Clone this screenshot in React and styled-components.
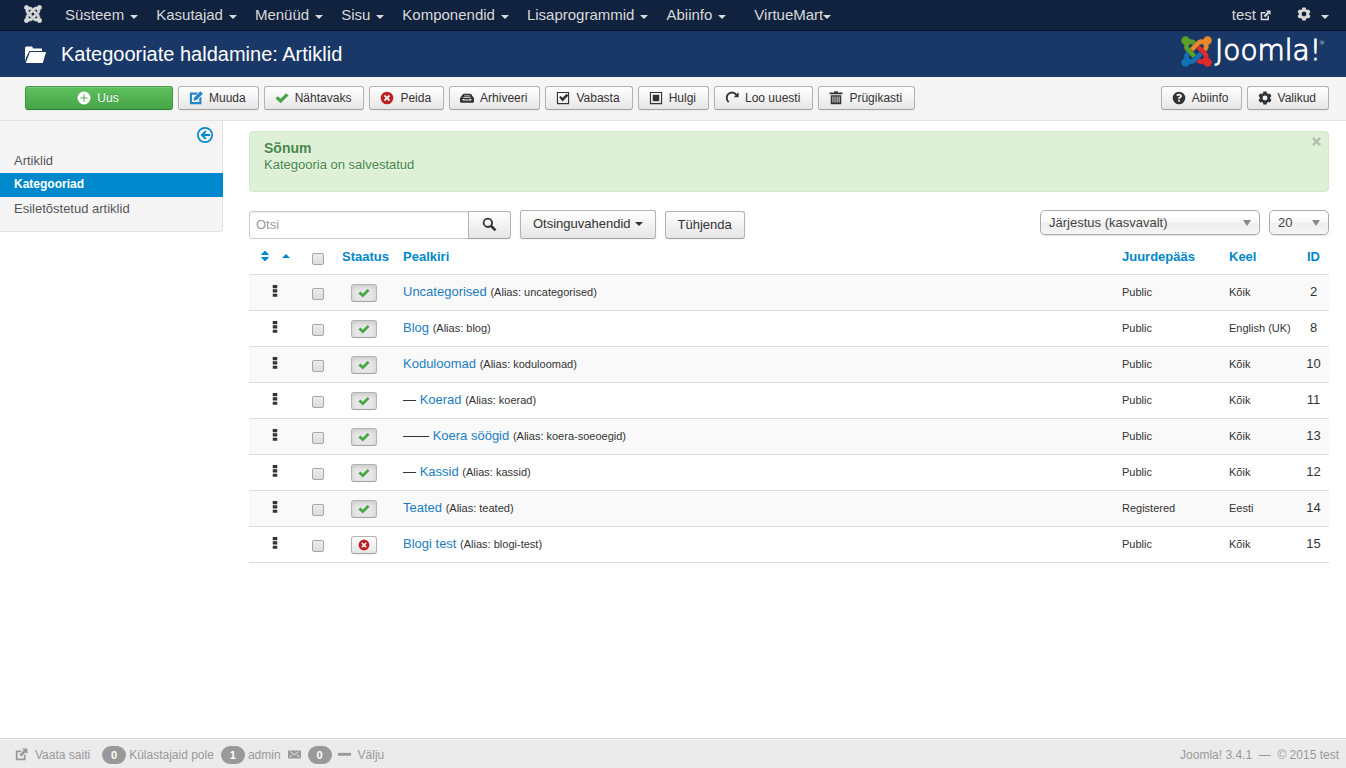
import React from "react";
import styled, { createGlobalStyle, css } from "styled-components";

const GlobalStyle = createGlobalStyle`
  * {
    box-sizing: border-box;
  }
  body {
    margin: 0;
    background: #fff;
    color: #333;
    font-family: "Liberation Sans", Arial, Helvetica, sans-serif;
    font-size: 13px;
    line-height: 18px;
  }
  button, input, select {
    font-family: inherit;
    margin: 0;
  }
  a {
    text-decoration: none;
  }
`;

/* ---------- icons ---------- */

const Svg = styled.svg`
  display: block;
  flex: none;
  fill: currentColor;
`;

const paths = {
  plus: (
    <path
      fillRule="evenodd"
      d="M8 .6a7.400 7.400 0 1 0 0 14.800A7.400 7.400 0 0 0 8 .6zm-.6 3.200h1.200v3.600h3.600v1.200H8.600v3.600H7.400V8.600H3.800V7.400h3.600z"
    />
  ),
  edit: (
    <>
      <path d="M1 1.600h9.500L8 4.200H3.400v8.400h8.400V8.600l2.400-2.400V15H1z" />
      <path d="M13 .4 15.800 3.200 9 10l-4 1.200L6.200 7.200z" />
    </>
  ),
  check: <path d="M.6 8.600 3.200 6l3.200 2.900 6.400-6.400L15.400 5l-9 9z" />,
  cancel: (
    <path
      fillRule="evenodd"
      d="M8 .8a7.200 7.200 0 1 0 0 14.400A7.200 7.200 0 0 0 8 .8zM5.900 4.400 8 6.500l2.100-2.100 1.500 1.500L9.500 8l2.100 2.100-1.500 1.500L8 9.500l-2.100 2.100-1.500-1.500L6.500 8 4.400 5.900z"
    />
  ),
  archive: (
    <path
      fillRule="evenodd"
      d="M4.600 3h6.800l1.400.8L16 8.400v4.200l-1 .9H1l-1-.9V8.400l3.200-4.600zM4.800 5v.9h6.400V5zM3.700 7v.9h8.600V7zM2.500 9l1 1.800h9l1-1.800h-2l-.8.800H5.300L4.500 9z"
    />
  ),
  checkbox: (
    <>
      <path fillRule="evenodd" d="M1 1h14v14H1zm1.300 1.300v11.400h11.400V2.300z" />
      <path d="M3.600 7.200 5.400 5.600l2.100 2.200L12.200 3l2 2-6.700 7z" />
    </>
  ),
  partial: (
    <>
      <path fillRule="evenodd" d="M1 1h14v14H1zm1.300 1.300v11.400h11.400V2.300z" />
      <path d="M4.300 4.300h7.400v7.400H4.300z" />
    </>
  ),
  redo: (
    <path d="M10 7h5.600V1.400l-2 2A7 7 0 0 0 1 8c0 2.200 1 4.200 2.600 5.500l1.200-1.600A4.900 4.900 0 0 1 3.100 8a4.900 4.900 0 0 1 8.900-2.900z" />
  ),
  trash: (
    <path
      fillRule="evenodd"
      d="M6 .4h4v1.200h5.400v2.200H.6V1.600H6zM2 4.800h12V15H2zm2 1.400v7h1v-7zm2.400 0v7h1v-7zm2.400 0v7h1v-7zm2.300 0v7h1v-7z"
    />
  ),
  question: (
    <path
      fillRule="evenodd"
      d="M8 .8a7.200 7.200 0 1 0 0 14.400A7.200 7.200 0 0 0 8 .8zM4.900 4.800C5.500 3.700 6.600 3.100 8 3.100c2 0 3.300 1.100 3.300 2.700 0 1.100-.6 1.800-1.500 2.300-.7.400-.8.600-.8 1.200H7.100c0-1.500.4-2 1.400-2.600.6-.3.800-.5.800-.9 0-.5-.5-.8-1.200-.8-.8 0-1.200.3-1.600.9zM7.100 10.400H9v1.900H7.100z"
    />
  ),
  cog: (
    <path
      fillRule="evenodd"
      d="M6.200.6h3.600l.5 1.900 1.400.8 1.900-.5 1.800 3L14 7.200v1.600l1.400 1.400-1.800 3-1.900-.5-1.400.8-.5 1.900H6.200l-.5-1.900-1.400-.8-1.900.5-1.800-3L2 8.800V7.200L.6 5.800l1.800-3 1.900.5 1.400-.8zM8 5.200a2.800 2.800 0 1 0 0 5.600 2.800 2.800 0 0 0 0-5.600z"
    />
  ),
  search: (
    <path
      fillRule="evenodd"
      d="M6.200.8a5.400 5.400 0 1 0 2.900 10L13.400 15.200 15.400 13.200 11 8.800A5.400 5.400 0 0 0 6.200.8zm0 1.900a3.500 3.500 0 1 1 0 7 3.500 3.500 0 0 1 0-7z"
    />
  ),
  external: (
    <>
      <path d="M1 3h7.500L6.800 5.200H3.200v7.600h7.600V9.500l2.200-2V15H1z" />
      <path d="M8.600.6h6.800v6.800l-2.200-2.200-5.400 5.400-2.400-2.400 5.400-5.400z" />
    </>
  ),
  back: (
    <>
      <path
        fillRule="evenodd"
        d="M8 0a8 8 0 1 0 0 16A8 8 0 0 0 8 0zm0 1.700a6.300 6.300 0 1 1 0 12.600A6.300 6.300 0 0 1 8 1.700z"
      />
      <path d="M8.200 3.400 9.600 4.800 7.400 7h5.600v2H7.400l2.200 2.200-1.400 1.400L3.600 8z" />
    </>
  ),
  sort: <path d="M8 1.600l4.800 5.200H3.200zM3.200 9h9.600L8 14.200z" />,
  dots: <path d="M5 0h6v4.200H5zM5 5.800h6V10H5zM5 11.600h6v4.200H5z" />,
  mail: (
    <path
      fillRule="evenodd"
      d="M0 3h16v10H0zm2.300 1.500L8 9l5.700-4.500-.6-.5L8 7.700 2.900 4zM2 11.600l3.600-3-.6-.5-3.600 3zm12 0 .6-.5-3.600-3-.6.500z"
    />
  ),
  minus: <path d="M0 6h16v3.500H0z" />,
  close: <path d="M1.500 4 4 1.500l4 4 4-4L14.500 4l-4 4 4 4-2.500 2.500-4-4-4 4L1.500 12l4-4z" />,
};

const Icon = ({ name, size = 14, color }) => (
  <Svg width={size} height={size} viewBox="0 0 16 16" color={color} aria-hidden="true">
    {paths[name]}
  </Svg>
);

const FolderIcon = () => (
  <Svg width="21" height="17" viewBox="0 0 21 17" aria-hidden="true">
    <path d="M0 16V1.500L1 .5h6l1.300 2H17V5H4.500L1 11.500z" />
    <path d="M.8 17 5 6h16l-3.200 11z" />
  </Svg>
);

// four arms: top left, top right, bottom right, bottom left
const arms = [
  "M.6 92.1C.6 58.8 27.4 32 60.4 32c30 0 54.500 21.900 59.200 50.200 32.600-7.600 67.100.6 96.500 30l-44.300 44.300c-20.500-20.500-42.600-16.300-55.400-3.500-14.300 14.300-14.300 37.900 0 52.200l99.500 99.500-44 44.300c-87.700-87.200-49.700-49.700-99.800-99.700-26.800-26.500-35-64.800-24.800-98.900C20.400 144.600.6 120.700.6 92.100z",
  "M130.100 208.500l44.300 44.300c10-10 89.700-89.700 99.700-99.800 14.300-14.300 37.600-14.300 51.900 0 12.800 12.800 17 35-3.500 55.400l44 44.300c31.200-31.200 38.500-67.600 28.900-101.200 29.200-4.100 51.900-29.200 51.900-59.500 0-33.200-26.800-60.100-59.800-60.100-30.300 0-55.400 22.500-59.500 51.600-33.800-9.900-71.700-1.500-98.300 25.100-18.300 19.100-71.100 71.500-99.600 99.900z",
  "M396.400 360.700c8.200-32.700-.9-68.500-26.300-93.900-11.800-12.200 5 4.700-99.500-99.700l-44.300 44.300 99.700 99.700c14.300 14.300 14.300 37.600 0 51.900-12.800 12.800-35 17-55.400-3.500l-44 44.300c27.600 30.200 68 38.800 102.700 28 5.500 27.400 29.700 48.100 58.900 48.100 33 0 59.800-26.800 59.800-60.100 0-30.200-22.500-55-51.600-59.100z",
  "M312.100 307.600l-44-44.300c-87 86.400-50.400 50.400-99.700 99.800-14.300 14.300-37.600 14.300-51.900 0-13.100-13.400-16.900-35.300 3.200-55.400l-44-44.300c-30.200 30.200-38 65.200-29.500 98.300-26.700 6-46.200 29.900-46.200 58.200C0 453.200 26.800 480 59.800 480c28.600 0 52.500-19.800 58.600-46.700 32.700 8.200 68.500-.6 94.200-26 32.100-32 12.200-12.400 99.500-99.700z",
];

const JoomlaMark = ({ size, colors, stroke = 0 }) => (
  <Svg width={size} height={size} viewBox="-6 26 460 460" aria-hidden="true">
    {arms.map((d, i) => {
      const color = colors ? colors[i] : "currentColor";
      return <path key={i} d={d} fill={color} stroke={color} strokeWidth={stroke} />;
    })}
  </Svg>
);

const Caret = styled.span`
  flex: none;
  border: 4px solid transparent;
  border-top-color: currentColor;
  border-bottom: 0;
`;

/* ---------- top navigation ---------- */

const NavBar = styled.nav`
  display: flex;
  align-items: center;
  height: 31px;
  padding: 0 17px 0 24px;
  background: #10223e;
  border-bottom: 1px solid #0b1629;
  color: #d9d9d9;
`;

const Brand = styled.a`
  display: flex;
  margin-right: 14px;
  padding-bottom: 2px;
  color: inherit;
`;

const NavLink = styled.a`
  display: flex;
  align-items: center;
  gap: ${(p) => p.$gap || "6px"};
  padding: 0 9px;
  margin-left: ${(p) => (p.$apart ? "10px" : "0")};
  color: inherit;
  font-size: 15px;
  white-space: nowrap;

  ${Caret} {
    margin-top: 3px;
  }
`;

const NavRight = styled.div`
  display: flex;
  align-items: center;
  margin-left: auto;
  gap: 8px;
`;

const SettingsLink = styled(NavLink)`
  gap: 10px;
  padding-right: 0;

  svg {
    margin-bottom: 3px;
  }
`;

/* ---------- header ---------- */

const Header = styled.header`
  display: flex;
  align-items: center;
  justify-content: space-between;
  height: 46px;
  padding: 0 21px 0 25px;
  background: #1a3867;
  color: #fff;
`;

const PageTitle = styled.h1`
  display: flex;
  align-items: center;
  gap: 15px;
  margin: 0;
  font-size: 20px;
  font-weight: normal;
  line-height: 30px;
`;

const Logo = styled.a`
  display: flex;
  align-items: center;
  gap: 3px;
  padding-bottom: 6px;
  color: #fff;
  font-family: "DejaVu Sans", sans-serif;
  font-size: 28px;
  font-weight: 200;
  line-height: 30px;
  -webkit-text-stroke: 1px #fff;

  sup {
    align-self: flex-start;
    margin-left: -5px;
    font-size: 6px;
    line-height: 14px;
    -webkit-text-stroke: 0;
  }
`;

/* ---------- buttons ---------- */

const buttonLook = css`
  display: inline-flex;
  align-items: center;
  justify-content: center;
  border: 1px solid #b3b3b3;
  border-bottom-color: #a2a2a2;
  border-radius: 3px;
  background: linear-gradient(to bottom, #fff, #e6e6e6);
  box-shadow: inset 0 1px 0 rgba(255, 255, 255, 0.2), 0 1px 2px rgba(0, 0, 0, 0.05);
  color: #333;
  white-space: nowrap;
  cursor: pointer;
`;

const Toolbar = styled.div`
  display: flex;
  gap: 5px;
  padding: 9px 17px 10px 25px;
  background: #f5f5f5;
  border-bottom: 1px solid #e3e3e3;
`;

const ToolButton = styled.button`
  ${buttonLook}
  gap: 6px;
  height: 24px;
  padding: 0 12px 0 10px;
  font-size: 12px;
`;

const NewButton = styled(ToolButton)`
  width: 148px;
  border-color: #409740;
  border-bottom-color: #2f7d2f;
  background: linear-gradient(to bottom, #5fc05f, #46a546);
  color: #fff;
  text-shadow: 0 -1px 0 rgba(0, 0, 0, 0.25);
`;

const ToolRight = styled.div`
  display: flex;
  gap: 5px;
  margin-left: auto;
`;

/* ---------- body ---------- */

const Page = styled.div`
  display: flex;
  flex-direction: column;
  min-height: 100vh;
`;

const Body = styled.div`
  display: flex;
  flex: 1;
  align-items: flex-start;
`;

const Sidebar = styled.aside`
  flex: none;
  width: 223px;
  padding-bottom: 10px;
  background: #f5f5f5;
  border: solid #e3e3e3;
  border-width: 0 1px 1px 0;
  border-radius: 0 0 4px 0;
`;

const CollapseButton = styled.button`
  display: block;
  margin: 0 9px 0 auto;
  padding: 6px 0;
  border: 0;
  background: none;
  color: #08c;
  cursor: pointer;
`;

const SideLink = styled.a`
  display: block;
  height: 24px;
  margin-right: -1px;
  padding-left: 14px;
  line-height: 23px;
  color: ${(p) => (p.$active ? "#fff" : "#555")};
  background: ${(p) => (p.$active ? "#08c" : "none")};
  font-size: ${(p) => (p.$active ? "12px" : "13px")};
  font-weight: ${(p) => (p.$active ? "bold" : "normal")};
`;

const Content = styled.main`
  flex: 1;
  min-width: 0;
  padding: 10px 17px 20px 26px;
`;

const Alert = styled.div`
  display: flex;
  justify-content: space-between;
  align-items: flex-start;
  padding: 8px 6px 18px 14px;
  border: 1px solid #d0e9c6;
  border-radius: 4px;
  background: #dff0d8;
  color: #468847;
  text-shadow: 0 1px 0 rgba(255, 255, 255, 0.5);

  h4 {
    margin: 0;
    font-size: 14px;
    line-height: 16px;
  }
  p {
    margin: 0;
    line-height: 17px;
  }
`;

const AlertClose = styled.button`
  margin-top: -4px;
  padding: 0;
  border: 0;
  background: none;
  color: #b0c0ab;
  cursor: pointer;
`;

const Filters = styled.div`
  display: flex;
  align-items: flex-end;
  gap: 9px;
  margin-top: 18px;
`;

const SearchGroup = styled.form`
  display: flex;
`;

const SearchInput = styled.input`
  width: 220px;
  height: 28px;
  padding: 0 6px 2px;
  border: 1px solid #ccc;
  border-radius: 3px 0 0 3px;
  box-shadow: inset 0 1px 1px rgba(0, 0, 0, 0.075);
  color: #555;
  font-size: 13px;

  &::placeholder {
    color: #999;
  }
`;

const FilterButton = styled.button`
  ${buttonLook}
  gap: 4px;
  height: ${(p) => (p.$tall ? "29px" : "28px")};
  padding: 0 12px 2px;
  font-size: 13px;
`;

const SearchButton = styled(FilterButton)`
  width: 43px;
  margin-left: -1px;
  border-radius: 0 3px 3px 0;
`;

const SelectGroup = styled.div`
  display: flex;
  align-self: flex-start;
  gap: 9px;
  margin-left: auto;
`;

const SelectBox = styled.label`
  display: grid;
  align-items: center;
  width: ${(p) => p.$width};

  > * {
    grid-area: 1 / 1;
  }
`;

const Select = styled.select`
  width: 100%;
  height: 25px;
  padding: 0 8px;
  appearance: none;
  border: 1px solid #aaa;
  border-radius: 5px;
  background: linear-gradient(#fff 20%, #f6f6f6 50%, #eee 52%, #f4f4f4 100%);
  box-shadow: 0 0 3px #fff inset, 0 1px 1px rgba(0, 0, 0, 0.1);
  color: #444;
  font-size: 13px;
`;

const SelectArrow = styled.span`
  justify-self: end;
  margin-right: 9px;
  border: 4px solid transparent;
  border-top: 6px solid #888;
  border-bottom: 0;
  pointer-events: none;
`;

/* ---------- table ---------- */

const Table = styled.table`
  width: 100%;
  table-layout: fixed;
  border-collapse: separate;
  border-spacing: 0;
  border-bottom: 1px solid #ddd;
`;

const Col = styled.col`
  width: ${(p) => p.$width};
`;

const Th = styled.th`
  height: 35px;
  padding: 0 8px;
  text-align: ${(p) => p.$align || "left"};
  white-space: nowrap;

  a {
    color: #08c;
  }
`;

const Td = styled.td`
  height: 36px;
  padding: 0 8px ${(p) => (p.$small ? "1px" : "2px")};
  border-top: 1px solid #ddd;
  text-align: ${(p) => p.$align || "left"};
  font-size: ${(p) => (p.$small ? "11px" : "13px")};
  white-space: nowrap;
`;

const Tr = styled.tr`
  &:nth-child(odd) {
    background: #f9f9f9;
  }
`;

const SortLinks = styled.span`
  display: flex;
  align-items: center;
  gap: 10px;
  padding: 0 0 2px 1px;
`;

const SortUp = styled.span`
  border: 4px solid transparent;
  border-top: 0;
  border-bottom-color: currentColor;
`;

const Handle = styled.span`
  display: flex;
  justify-content: center;
  padding-bottom: 2px;
  cursor: move;
`;

const Checkbox = styled.input`
  display: block;
  width: 12px;
  height: 12px;
  margin: 4px auto 0;
  appearance: none;
  border: 1px solid #a6a6a6;
  border-radius: 2px;
  background: linear-gradient(#ededed, #dcdcdc);

  &:checked {
    background: #08c;
  }
`;

const StatusButton = styled.button`
  ${buttonLook}
  display: flex;
  width: 26px;
  height: 18px;
  margin: 2px 0 0 9px;
  padding: 0;
  ${(p) =>
    p.$active &&
    css`
      background: #e6e6e6;
      box-shadow: inset 0 2px 4px rgba(0, 0, 0, 0.12);
    `}
`;

const TitleLink = styled.a`
  color: #1c7ec4;
`;

const Alias = styled.small`
  font-size: 11px;
`;

/* ---------- footer ---------- */

const Footer = styled.footer`
  display: flex;
  align-items: center;
  justify-content: space-between;
  height: 30px;
  padding: 2px 7px 0 15px;
  background: #ebebeb;
  border-top: 1px solid #d4d4d4;
  box-shadow: inset 0 1px 0 #f6f6f6;
  color: #999;
  font-size: 12px;
`;

const StatusList = styled.div`
  display: flex;
  align-items: center;
  gap: 4px;

  a {
    display: flex;
    align-items: center;
    gap: 7px;
    color: inherit;
  }
  a:first-child {
    margin-right: 8px;
  }
`;

const Badge = styled.span`
  min-width: 24px;
  height: 18px;
  border-radius: 9px;
  background: #999;
  color: #fff;
  font-size: 11px;
  font-weight: bold;
  text-align: center;
`;

const StatusItem = styled.span`
  display: flex;
  align-items: center;
  gap: ${(p) => p.$gap || "3px"};
  margin-right: ${(p) => (p.$last ? "2px" : "3px")};
`;

const menu = ["Süsteem", "Kasutajad", "Menüüd", "Sisu", "Komponendid", "Lisaprogrammid", "Abiinfo"];

const tools = [
  { icon: "edit", label: "Muuda", color: "#2384c6" },
  { icon: "check", label: "Nähtavaks", color: "#46a546" },
  { icon: "cancel", label: "Peida", color: "#bd2020" },
  { icon: "archive", label: "Arhiveeri" },
  { icon: "checkbox", label: "Vabasta" },
  { icon: "partial", label: "Hulgi" },
  { icon: "redo", label: "Loo uuesti" },
  { icon: "trash", label: "Prügikasti" },
];

const sideLinks = ["Artiklid", "Kategooriad", "Esiletõstetud artiklid"];

const categories = [
  { id: 2, title: "Uncategorised", alias: "uncategorised", access: "Public", lang: "Kõik" },
  { id: 8, title: "Blog", alias: "blog", access: "Public", lang: "English (UK)" },
  { id: 10, title: "Koduloomad", alias: "koduloomad", access: "Public", lang: "Kõik" },
  { id: 11, title: "Koerad", alias: "koerad", access: "Public", lang: "Kõik", level: 1 },
  { id: 13, title: "Koera söögid", alias: "koera-soeoegid", access: "Public", lang: "Kõik", level: 2 },
  { id: 12, title: "Kassid", alias: "kassid", access: "Public", lang: "Kõik", level: 1 },
  { id: 14, title: "Teated", alias: "teated", access: "Registered", lang: "Eesti" },
  { id: 15, title: "Blogi test", alias: "blogi-test", access: "Public", lang: "Kõik", hidden: true },
];

const CategoryRow = ({ item }) => (
  <Tr>
    <Td>
      <Handle>
        <Icon name="dots" size={12} />
      </Handle>
    </Td>
    <Td>
      <Checkbox type="checkbox" aria-label={item.title} />
    </Td>
    <Td>
      <StatusButton type="button" $active={!item.hidden} aria-label="Staatus">
        {item.hidden ? (
          <Icon name="cancel" size={12} color="#bd2020" />
        ) : (
          <Icon name="check" size={12} color="#46a546" />
        )}
      </StatusButton>
    </Td>
    <Td>
      {item.level ? "—".repeat(item.level) + " " : ""}
      <TitleLink href="#">{item.title}</TitleLink> <Alias>(Alias: {item.alias})</Alias>
    </Td>
    <Td $small>{item.access}</Td>
    <Td $small>{item.lang}</Td>
    <Td $align="center">{item.id}</Td>
  </Tr>
);

const App = () => {
  return (
    <Page>
      <GlobalStyle />
      {/* top menu */}
      <NavBar>
        <Brand href="#" aria-label="Joomla">
          <JoomlaMark size={18} stroke={14} />
        </Brand>
        {menu.map((label) => (
          <NavLink href="#" key={label}>
            {label}
            <Caret />
          </NavLink>
        ))}
        <NavLink href="#" $gap="0" $apart>
          VirtueMart
          <Caret />
        </NavLink>
        <NavRight>
          <NavLink href="#" $gap="4px">
            test
            <Icon name="external" size={11} />
          </NavLink>
          <SettingsLink href="#" aria-label="Seaded">
            <Icon name="cog" size={14} />
            <Caret />
          </SettingsLink>
        </NavRight>
      </NavBar>

      <Header>
        <PageTitle>
          <FolderIcon />
          Kategooriate haldamine: Artiklid
        </PageTitle>
        <Logo href="#">
          <JoomlaMark size={31} colors={["#5ba027", "#e8892b", "#e32a2a", "#1071b5"]} stroke={8} />
          <span>Joomla!</span>
          <sup>®</sup>
        </Logo>
      </Header>

      <Toolbar>
        <NewButton type="button">
          <Icon name="plus" />
          Uus
        </NewButton>
        {tools.map(({ icon, label, color }) => (
          <ToolButton type="button" key={label}>
            <Icon name={icon} color={color} />
            {label}
          </ToolButton>
        ))}
        <ToolRight>
          <ToolButton type="button">
            <Icon name="question" />
            Abiinfo
          </ToolButton>
          <ToolButton type="button">
            <Icon name="cog" />
            Valikud
          </ToolButton>
        </ToolRight>
      </Toolbar>

      <Body>
        <Sidebar>
          <CollapseButton type="button" aria-label="Peida külgriba">
            <Icon name="back" size={16} />
          </CollapseButton>
          {sideLinks.map((label) => (
            <SideLink href="#" key={label} $active={label === "Kategooriad"}>
              {label}
            </SideLink>
          ))}
        </Sidebar>

        <Content>
          <Alert role="alert">
            <div>
              <h4>Sõnum</h4>
              <p>Kategooria on salvestatud</p>
            </div>
            <AlertClose type="button" aria-label="Sulge">
              <Icon name="close" size={11} />
            </AlertClose>
          </Alert>

          {/* search and sorting */}
          <Filters>
            <SearchGroup>
              <SearchInput type="text" placeholder="Otsi" aria-label="Otsi" />
              <SearchButton type="button" aria-label="Otsi">
                <Icon name="search" size={15} />
              </SearchButton>
            </SearchGroup>
            <FilterButton type="button" $tall>
              Otsinguvahendid
              <Caret />
            </FilterButton>
            <FilterButton type="button">Tühjenda</FilterButton>
            <SelectGroup>
              <SelectBox $width="220px">
                <Select aria-label="Järjestus">
                  <option>Järjestus (kasvavalt)</option>
                </Select>
                <SelectArrow />
              </SelectBox>
              <SelectBox $width="60px">
                <Select aria-label="Ridu lehel">
                  <option>20</option>
                </Select>
                <SelectArrow />
              </SelectBox>
            </SelectGroup>
          </Filters>

          <Table>
            <colgroup>
              <Col $width="52px" />
              <Col $width="33px" />
              <Col $width="61px" />
              <Col />
              <Col $width="107px" />
              <Col $width="77px" />
              <Col $width="31px" />
            </colgroup>
            <thead>
              <tr>
                <Th>
                  <a href="#" aria-label="Järjestus">
                    <SortLinks>
                      <Icon name="sort" />
                      <SortUp />
                    </SortLinks>
                  </a>
                </Th>
                <Th>
                  <Checkbox type="checkbox" aria-label="Vali kõik" />
                </Th>
                <Th>
                  <a href="#">Staatus</a>
                </Th>
                <Th>
                  <a href="#">Pealkiri</a>
                </Th>
                <Th>
                  <a href="#">Juurdepääs</a>
                </Th>
                <Th>
                  <a href="#">Keel</a>
                </Th>
                <Th $align="center">
                  <a href="#">ID</a>
                </Th>
              </tr>
            </thead>
            <tbody>
              {categories.map((item) => (
                <CategoryRow key={item.id} item={item} />
              ))}
            </tbody>
          </Table>
        </Content>
      </Body>

      <Footer>
        <StatusList>
          <a href="#">
            <Icon name="external" size={13} />
            Vaata saiti
          </a>
          <StatusItem>
            <Badge>0</Badge>
            Külastajaid pole
          </StatusItem>
          <StatusItem>
            <Badge>1</Badge>
            admin
          </StatusItem>
          <StatusItem $gap="7px" $last>
            <Icon name="mail" size={13} />
            <Badge>0</Badge>
          </StatusItem>
          <a href="#">
            <Icon name="minus" size={13} />
            Välju
          </a>
        </StatusList>
        <div>Joomla! 3.4.1 &nbsp;—&nbsp; © 2015 test</div>
      </Footer>
    </Page>
  );
};

export default App;
